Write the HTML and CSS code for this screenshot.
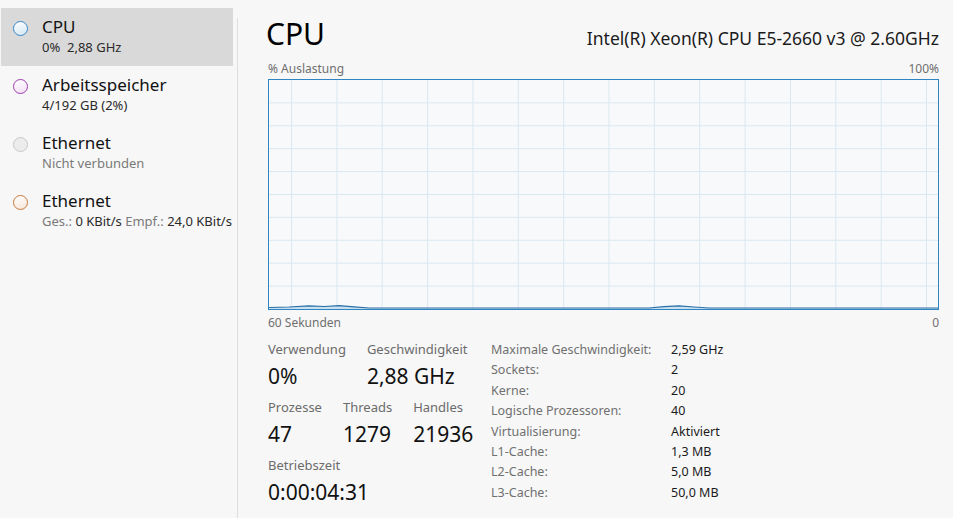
FILE: index.html
```html
<!DOCTYPE html>
<html lang="de">
<head>
    <meta charset="UTF-8">
    <title>Task-Manager - Leistung</title>
    <link rel="stylesheet" href="styles.css">
</head>
<body>
    <div class="app">
        <nav class="sidebar">
            <div class="item selected">
                <span class="dot dot-cpu"></span>
                <div class="item-text">
                    <div class="item-title">CPU</div>
                    <div class="item-sub">0%&nbsp; 2,88 GHz</div>
                </div>
            </div>
            <div class="item">
                <span class="dot dot-mem"></span>
                <div class="item-text">
                    <div class="item-title">Arbeitsspeicher</div>
                    <div class="item-sub">4/192 GB (2%)</div>
                </div>
            </div>
            <div class="item">
                <span class="dot dot-off"></span>
                <div class="item-text">
                    <div class="item-title">Ethernet</div>
                    <div class="item-sub muted">Nicht verbunden</div>
                </div>
            </div>
            <div class="item">
                <span class="dot dot-eth"></span>
                <div class="item-text">
                    <div class="item-title">Ethernet</div>
                    <div class="item-sub"><span class="muted">Ges.:</span> 0 KBit/s <span class="muted">Empf.:</span> 24,0 KBit/s</div>
                </div>
            </div>
        </nav>

        <div class="divider"></div>

        <main class="main">
            <div class="head">
                <h1 class="title">CPU</h1>
                <div class="model">Intel(R) Xeon(R) CPU E5-2660 v3 @ 2.60GHz</div>
            </div>

            <div class="axis">
                <span>% Auslastung</span>
                <span>100%</span>
            </div>

            <div class="graph">
                <svg viewBox="0 0 669 229" preserveAspectRatio="none" width="100%" height="229">
                    <g stroke="#dae8f1" stroke-width="1">
                        <line x1="0" y1="22.9" x2="669" y2="22.9"/>
                        <line x1="0" y1="45.8" x2="669" y2="45.8"/>
                        <line x1="0" y1="68.7" x2="669" y2="68.7"/>
                        <line x1="0" y1="91.6" x2="669" y2="91.6"/>
                        <line x1="0" y1="114.5" x2="669" y2="114.5"/>
                        <line x1="0" y1="137.4" x2="669" y2="137.4"/>
                        <line x1="0" y1="160.3" x2="669" y2="160.3"/>
                        <line x1="0" y1="183.2" x2="669" y2="183.2"/>
                        <line x1="0" y1="206.1" x2="669" y2="206.1"/>
                        <line x1="22.5" y1="0" x2="22.5" y2="229"/>
                        <line x1="67.9" y1="0" x2="67.9" y2="229"/>
                        <line x1="113.2" y1="0" x2="113.2" y2="229"/>
                        <line x1="158.6" y1="0" x2="158.6" y2="229"/>
                        <line x1="203.9" y1="0" x2="203.9" y2="229"/>
                        <line x1="249.3" y1="0" x2="249.3" y2="229"/>
                        <line x1="294.7" y1="0" x2="294.7" y2="229"/>
                        <line x1="340" y1="0" x2="340" y2="229"/>
                        <line x1="385.4" y1="0" x2="385.4" y2="229"/>
                        <line x1="430.7" y1="0" x2="430.7" y2="229"/>
                        <line x1="476.1" y1="0" x2="476.1" y2="229"/>
                        <line x1="521.5" y1="0" x2="521.5" y2="229"/>
                        <line x1="566.8" y1="0" x2="566.8" y2="229"/>
                        <line x1="612.2" y1="0" x2="612.2" y2="229"/>
                        <line x1="657.5" y1="0" x2="657.5" y2="229"/>
                    </g>
                    <path d="M0 227.5 L20 227 L40 225.8 L55 226.5 L70 225.6 L85 226.8 L100 228 L380 228 L395 226.6 L410 225.8 L425 227 L440 228 L669 228 L669 229 L0 229 Z" fill="#c9e0f0"/>
                    <path d="M0 227.5 L20 227 L40 225.8 L55 226.5 L70 225.6 L85 226.8 L100 228 L380 228 L395 226.6 L410 225.8 L425 227 L440 228 L669 228" fill="none" stroke="#2a6fa6" stroke-width="1.2"/>
                </svg>
            </div>

            <div class="axis axis-bottom">
                <span>60 Sekunden</span>
                <span>0</span>
            </div>

            <section class="stats">
                <div class="stat-block">
                    <div class="stat-row">
                        <div class="stat">
                            <div class="stat-label">Verwendung</div>
                            <div class="stat-value">0%</div>
                        </div>
                        <div class="stat">
                            <div class="stat-label">Geschwindigkeit</div>
                            <div class="stat-value">2,88 GHz</div>
                        </div>
                    </div>
                    <div class="stat-row">
                        <div class="stat">
                            <div class="stat-label">Prozesse</div>
                            <div class="stat-value">47</div>
                        </div>
                        <div class="stat">
                            <div class="stat-label">Threads</div>
                            <div class="stat-value">1279</div>
                        </div>
                        <div class="stat">
                            <div class="stat-label">Handles</div>
                            <div class="stat-value">21936</div>
                        </div>
                    </div>
                    <div class="stat-row">
                        <div class="stat">
                            <div class="stat-label">Betriebszeit</div>
                            <div class="stat-value">0:00:04:31</div>
                        </div>
                    </div>
                </div>

                <dl class="specs">
                    <dt>Maximale Geschwindigkeit:</dt><dd>2,59 GHz</dd>
                    <dt>Sockets:</dt><dd>2</dd>
                    <dt>Kerne:</dt><dd>20</dd>
                    <dt>Logische Prozessoren:</dt><dd>40</dd>
                    <dt>Virtualisierung:</dt><dd>Aktiviert</dd>
                    <dt>L1-Cache:</dt><dd>1,3 MB</dd>
                    <dt>L2-Cache:</dt><dd>5,0 MB</dd>
                    <dt>L3-Cache:</dt><dd>50,0 MB</dd>
                </dl>
            </section>
        </main>
    </div>
</body>
</html>
```

FILE: styles.css
```css
body {
    margin: 0;
    background: #f7f7f7;
    color: #1b1b1b;
    font-family: "Noto Sans", "Open Sans", sans-serif;
    height: 518px;
    overflow: hidden;
}

.app {
    display: flex;
    height: 518px;
}

/* left list */
.sidebar {
    width: 232px;
    padding: 8px 0 0 1px;
    flex-shrink: 0;
}

.item {
    display: flex;
    align-items: flex-start;
    gap: 14px;
    height: 58px;
    padding: 8px 0 0 12px;
    box-sizing: border-box;
}

.item.selected {
    background: #d9d9d9;
}

.dot {
    width: 13px;
    height: 13px;
    border-radius: 50%;
    border: 1.5px solid;
    margin-top: 5px;
    flex-shrink: 0;
}

.dot-cpu {
    border-color: #3a87c4;
    background: linear-gradient(160deg, #ffffff 0%, #d3e6f4 100%);
}

.dot-mem {
    border-color: #a03cb3;
    background: linear-gradient(160deg, #ffffff 0%, #f1def4 100%);
}

.dot-off {
    border-color: #c8c8c8;
    background: #ececec;
}

.dot-eth {
    border-color: #c6783a;
    background: linear-gradient(160deg, #ffffff 0%, #f6e6d9 100%);
}

.item-title {
    font-size: 17px;
    line-height: 22px;
    color: #111;
}

.item-sub {
    font-size: 13px;
    line-height: 18px;
    color: #2a2a2a;
    white-space: nowrap;
}

.muted {
    color: #7a7a7a;
}

.divider {
    width: 1px;
    background: #dedede;
    margin: 18px 0 0 4px;
    flex-shrink: 0;
}

/* right panel */
.main {
    flex: 1;
    padding: 16px 14px 0 30px;
    min-width: 0;
}

.head {
    display: flex;
    justify-content: space-between;
    align-items: baseline;
}

.title {
    margin: 0 0 0 -2px;
    font-size: 30px;
    line-height: 36px;
    font-weight: 400;
    color: #000;
}

.model {
    font-size: 17.5px;
    color: #1b1b1b;
}

.axis {
    display: flex;
    justify-content: space-between;
    font-size: 12px;
    line-height: 16px;
    color: #6f6f6f;
    margin-top: 9px;
}

.axis-bottom {
    margin-top: 5px;
}

.graph {
    margin-top: 2px;
    border: 1px solid #2f84c2;
    height: 229px;
    background: #f8f9fa;
}

.graph svg {
    display: block;
}

.stats {
    display: flex;
    margin-top: 9px;
}

.stat-block {
    width: 223px;
    flex-shrink: 0;
}

.stat-row {
    display: flex;
    gap: 21px;
    margin-bottom: 6px;
}

.stat-label {
    font-size: 13px;
    line-height: 18px;
    color: #6b6b6b;
}

.stat-value {
    font-size: 21px;
    line-height: 32px;
    margin-top: 2px;
    color: #111;
}

.specs {
    display: grid;
    grid-template-columns: 180px auto;
    grid-auto-rows: 20.4px;
    margin: 0;
    font-size: 12.5px;
    line-height: 20.4px;
}

.specs dt {
    color: #707070;
}

.specs dd {
    margin: 0;
    color: #1b1b1b;
}
```
